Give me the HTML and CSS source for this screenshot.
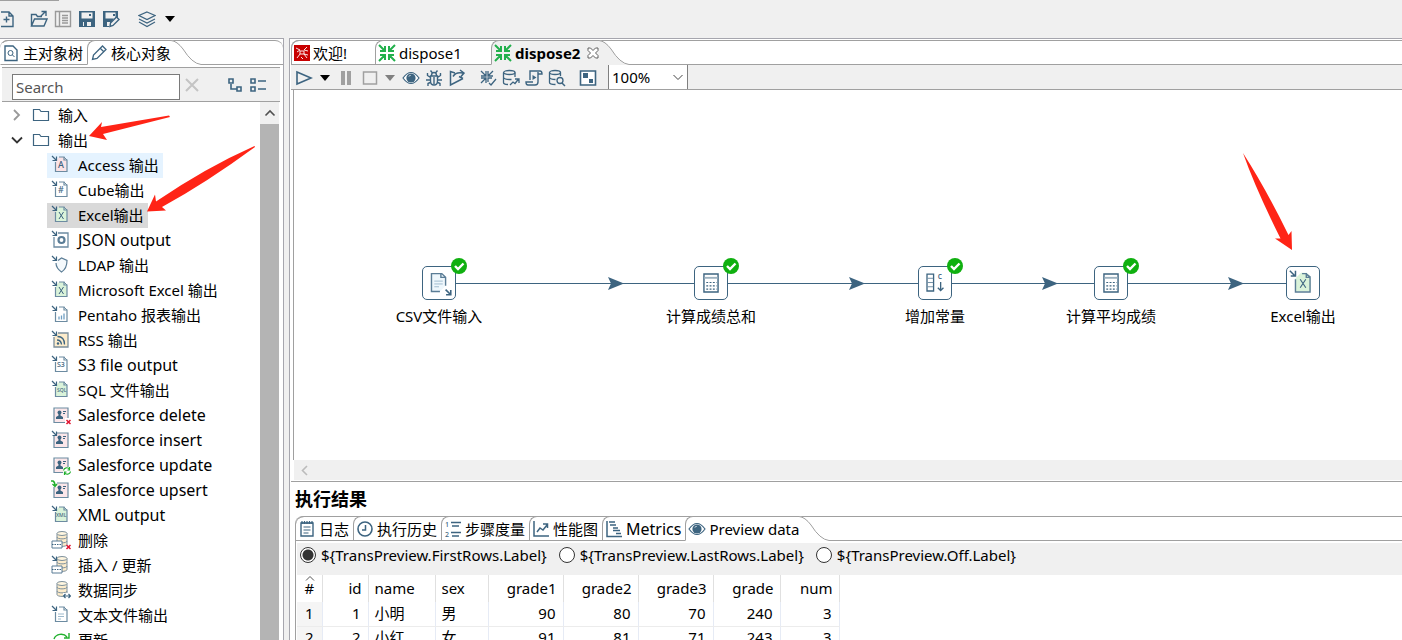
FILE: index.html
```html
<!DOCTYPE html>
<html lang="zh-CN">
<head>
<meta charset="utf-8">
<title>dispose2</title>
<link rel="stylesheet" href="styles.css">
</head>
<body>
<svg class="defs" aria-hidden="true">
  <defs>
    <g id="in-arrow"><path d="M1 1l4 4M5.500 1.500v4h-4" fill="none" stroke="#3d6480" stroke-width="1.200"/></g>
    <g id="doc"><path d="M4.500 7v9.500h11.500V5h-3V2H8" fill="none" stroke="#6c8ba1" stroke-width="1.200"/><path d="M13 2l3 3" stroke="#6c8ba1"/></g>
    <g id="contact"><path d="M3 6v12h14V3H6" fill="#fbe6e9"/><path d="M3 3h14v14.500H3z" fill="none" stroke="#6c8ba1" stroke-width="1.200"/><circle cx="8.500" cy="7.500" r="2" fill="#3d6480"/><path d="M5 14v-2l2.500-1.500V9h2v1.500L12 12v2zM12 6h3v1h-3zM12 8h2v1h-2z" fill="#3d6480"/></g>
    <g id="db"><path d="M6 3.500v11c0 2.500 10 2.500 10 0v-11" fill="#fdeccb" stroke="#7c8f9c"/><ellipse cx="11" cy="3.500" rx="5" ry="2" fill="#fff6e0" stroke="#7c8f9c"/><path d="M6 7c0 2.500 10 2.500 10 0M6 11c0 2.500 10 2.500 10 0" fill="none" stroke="#7c8f9c"/></g>
    <g id="slot"><path d="M1 11h10v7H1z" fill="#fff" stroke="#5b7d96"/><path d="M1 14.500h10" stroke="#3d6480" stroke-dasharray="1.500 1"/></g>
    <g id="redx"><path d="M15.500 15l4 4m0-4l-4 4" stroke="#e0122f" stroke-width="1.500"/></g>
    <symbol id="i-xls" viewBox="0 0 20 20"><path d="M5 6l3-4h5l3 3v12H5z" fill="#daf3da"/><use href="#doc"/><use href="#in-arrow"/><path d="M8 7l4.500 7M12.500 7L8 14" stroke="#3d6480" fill="none"/></symbol>
    <symbol id="folder" viewBox="0 0 20 20"><path d="M2.500 15.500v-11h6l1.500 2h7.500v9z" fill="#fff" stroke="#3d6480" stroke-width="1.200"/></symbol>
    <symbol id="eye" viewBox="0 0 18 18"><path d="M1 9q8-11 16 0q-8 11-16 0z" fill="#fff" stroke="#3d6480" stroke-width="1.200"/><circle cx="9" cy="9" r="4.600" fill="#3d6480"/><path d="M7 7.500l1.500-1.500" stroke="#fff"/></symbol>
    <symbol id="trans" viewBox="0 0 18 18"><path d="M1 1l5.500 5.500M2 7h5V2M17 1l-5.500 5.500M16 7h-5V2M1 17l5.500-5.500M2 11h5v5M17 17l-5.500-5.500M16 11h-5v5" fill="none" stroke="#22b04c" stroke-width="2"/></symbol>
    <symbol id="caret" viewBox="0 0 10 6"><path d="M0 0h10L5 6z" fill="currentColor"/></symbol>
    <symbol id="calc" viewBox="0 0 34 34"><path d="M9.500 7.500h15v19h-15z" fill="#fff" stroke="#3d6480" stroke-width="1.500"/><path d="M10 11.500h14" stroke="#9db2c0" stroke-width="2"/><path d="M12 16.500h11M12 20h11M12 23.500h11" stroke="#3d6480" stroke-width="1.200" stroke-dasharray="2 1.500"/></symbol>
    <symbol id="ok" viewBox="0 0 16 16"><circle cx="8" cy="8" r="8" fill="#10b010"/><path d="M4 8l3 3 5.500-5.500" fill="none" stroke="#fff" stroke-width="2.400"/></symbol>
    <symbol id="curve" viewBox="0 0 30 25"><path class="curve-fill" d="M0 0q6 1 12 9q9 14 18 15.500V25H0z"/><path d="M0 .5q6 .5 12 8.500q9 14.500 18 15.500" fill="none" stroke="#a0a0a0"/></symbol>
    <symbol id="shut" viewBox="0 0 12 12"><path d="M1 1h2.500L6 3.500 8.500 1H11v2.500L8.500 6 11 8.500V11H8.500L6 8.500 3.500 11H1V8.500L3.500 6 1 3.500z" fill="#fff" stroke="#606060"/></symbol>
  </defs>
</svg>

<header class="toolbar">
  <button class="tool narrow" aria-label="New"><svg viewBox="0 0 14 18"><path d="M1 2h8l4 4v10.500H1M6.500 6.500v6M3.500 9.500h6M9 2v4h4" fill="none" stroke="#3d6480" stroke-width="1.400"/></svg></button>
  <button class="tool" aria-label="Open"><svg viewBox="0 0 18 18"><path d="M1.500 16V4.500H6l1.500 2H12M1.500 16L4.500 9H17l-3 7zM10 7l5.500-5.500M11.500 1.500H16V6" fill="none" stroke="#3d6480" stroke-width="1.400"/></svg></button>
  <button class="tool" aria-label="Explore"><svg viewBox="0 0 18 18"><path d="M1.500 1.500h15v15h-15zM5.500 2v14M8 5.500h6M8 8h6M8 10.500h6M8 13h6" fill="none" stroke="#999" stroke-width="1.400"/></svg></button>
  <button class="tool" aria-label="Save"><svg viewBox="0 0 18 18"><path d="M1 1h16v16H1z" fill="#3d6480"/><path d="M3.500 2.500h11v6h-11zM5 12h8v4H5z" fill="#f0f0f0"/><path d="M6 12h3v4H6zM11 4h2v2h-2z" fill="#3d6480"/></svg></button>
  <button class="tool" aria-label="Save as"><svg viewBox="0 0 18 18"><path d="M1 1h15v7H12l-5 9H1z" fill="#3d6480"/><path d="M3.500 2.500h10v6h-10zM5 12h3v4H5z" fill="#f0f0f0"/><path d="M11 4h2v2h-2z" fill="#3d6480"/><path d="M8.500 13l6-6 2.500 2.500-6 6-3 1z" fill="#f0f0f0" stroke="#3d6480" stroke-width="1.400"/></svg></button>
  <button class="tool layers" aria-label="Perspective"><svg viewBox="0 0 18 18"><path d="M9 2l8 3.500L9 9.500 1 5.500zM1 9l8 4 8-4M1 12l8 4.500 8-4.500" fill="none" stroke="#3d6480" stroke-width="1.200"/></svg></button>
  <button class="tool drop" aria-label="Perspective menu"><svg><use href="#caret"/></svg></button>
</header>

<main class="workspace">
  <aside class="side">
    <div class="tabs" role="tablist">
      <button class="tab" role="tab"><svg viewBox="0 0 18 18"><path d="M3 2h8l4 4v10.500H3z" fill="none" stroke="#3d6480" stroke-width="1.400"/><circle cx="8.500" cy="9" r="2.500" fill="none" stroke="#3d6480"/><path d="M10.500 11l2 2" stroke="#3d6480"/></svg>主对象树</button>
      <button class="tab on" role="tab" aria-selected="true"><svg viewBox="0 0 18 18"><path d="M2.500 15.500l1-4.500 9-9 3.500 3.500-9 9zM10.500 4.500l3 3" fill="none" stroke="#3d6480" stroke-width="1.300"/></svg>核心对象</button>
      <svg class="curve"><use href="#curve"/></svg>
    </div>
    <div class="search">
      <input type="text" placeholder="Search" aria-label="Search">
      <button class="tool" aria-label="Clear"><svg viewBox="0 0 18 18"><path d="M3 3l12 12M15 3L3 15" stroke="#c4c4c4" stroke-width="2"/></svg></button>
      <button class="tool expand" aria-label="Expand all"><svg viewBox="0 0 18 18"><path d="M3 3h4v4H3zM11 11h4v4h-4zM5 8v5h6" fill="none" stroke="#3d6480" stroke-width="1.600"/></svg></button>
      <button class="tool" aria-label="Collapse all"><svg viewBox="0 0 18 18"><path d="M2 3h4v4H2zM2 11h4v4H2zM9 5h8M9 13h8" fill="none" stroke="#3d6480" stroke-width="1.600"/></svg></button>
    </div>
    <div class="tree-wrap">
      <ul class="tree">
        <li class="group"><svg class="twist" viewBox="0 0 12 12"><path d="M3 1l5 5-5 5" fill="none" stroke="#999" stroke-width="1.800"/></svg><svg><use href="#folder"/></svg>输入</li>
        <li class="group"><svg class="twist" viewBox="0 0 12 12"><path d="M1 3.500l5 5 5-5" fill="none" stroke="#333" stroke-width="1.800"/></svg><svg><use href="#folder"/></svg>输出</li>
        <li class="leaf hover"><svg viewBox="0 0 20 20"><path d="M5 6l3-4h5l3 3v12H5z" fill="#fbe3e6"/><use href="#doc"/><use href="#in-arrow"/><text x="7" y="13">A</text></svg>Access 输出</li>
        <li class="leaf"><svg viewBox="0 0 20 20"><use href="#doc"/><use href="#in-arrow"/><text x="7" y="13">#</text></svg>Cube输出</li>
        <li class="leaf picked"><svg><use href="#i-xls"/></svg>Excel输出</li>
        <li class="leaf latin"><svg viewBox="0 0 20 20"><path d="M3 7v10h14V3H7" fill="none" stroke="#6c8ba1" stroke-width="1.300"/><use href="#in-arrow"/><circle cx="10.500" cy="10" r="3" fill="none" stroke="#5b7d96" stroke-width="2.200"/></svg>JSON output</li>
        <li class="leaf"><svg viewBox="0 0 20 20"><path d="M7 5.500L10.500 3l5.500 2.500C16 11 14.500 14.500 10.500 17 7 14.500 5 12 5 8" fill="#f4f9fc" stroke="#5b7d96" stroke-width="1.200"/><use href="#in-arrow"/></svg>LDAP 输出</li>
        <li class="leaf"><svg><use href="#i-xls"/></svg>Microsoft Excel 输出</li>
        <li class="leaf"><svg viewBox="0 0 20 20"><use href="#doc"/><use href="#in-arrow"/><path d="M8 14.500v-3M10.500 14.500v-4M13 14.500v-6" stroke="#6f9fc4" stroke-width="1.300"/></svg>Pentaho 报表输出</li>
        <li class="leaf"><svg viewBox="0 0 20 20"><path d="M3 7v10h14V3H7z" fill="#fdeccb"/><path d="M3 7v10h14V3H7" fill="none" stroke="#7c8f9c" stroke-width="1.300"/><use href="#in-arrow"/><path d="M6 10q4 0 4.500 4.500M6.500 6.500q7 0 7 8" fill="none" stroke="#3d6480" stroke-width="1.300"/><circle cx="7" cy="13.500" r="1.200" fill="#3d6480"/></svg>RSS 输出</li>
        <li class="leaf latin"><svg viewBox="0 0 20 20"><use href="#doc"/><use href="#in-arrow"/><text class="small" x="6" y="12">S3</text></svg>S3 file output</li>
        <li class="leaf"><svg viewBox="0 0 20 20"><path d="M5 6l3-4h5l3 3v12H5z" fill="#daf3da"/><use href="#doc"/><use href="#in-arrow"/><text class="tiny" x="6" y="12">SQL</text></svg>SQL 文件输出</li>
        <li class="leaf latin"><svg viewBox="0 0 20 20"><use href="#contact"/><path d="M14 13h6v7h-6z" fill="#fff"/><use href="#redx"/></svg>Salesforce delete</li>
        <li class="leaf latin"><svg viewBox="0 0 20 20"><use href="#contact"/><path d="M0 0h6v6H0z" fill="#fff"/><use href="#in-arrow"/></svg>Salesforce insert</li>
        <li class="leaf latin"><svg viewBox="0 0 20 20"><use href="#contact"/><path d="M12 12h8v8h-8z" fill="#fff"/><path d="M12.500 15.500a3.200 3.200 0 0 1 6-1M19.500 16.500a3.200 3.200 0 0 1-6 1M18.500 12v3h-2M13.500 20v-3h2" fill="none" stroke="#22b02e" stroke-width="1.200"/></svg>Salesforce update</li>
        <li class="leaf latin"><svg viewBox="0 0 20 20"><use href="#contact"/><path d="M0 0h6v7H0z" fill="#fff"/><path d="M0 1h2q2 1 2 5M1.500 4L4 6.500 6 4" fill="none" stroke="#22b02e" stroke-width="1.400"/></svg>Salesforce upsert</li>
        <li class="leaf latin"><svg viewBox="0 0 20 20"><path d="M5 6l3-4h5l3 3v12H5z" fill="#daf3da"/><use href="#doc"/><use href="#in-arrow"/><text class="tiny" x="5" y="12">XML</text></svg>XML output</li>
        <li class="leaf"><svg viewBox="0 0 20 20"><use href="#db"/><use href="#slot"/><use href="#redx"/></svg>删除</li>
        <li class="leaf"><svg viewBox="0 0 20 20"><use href="#db"/><use href="#slot"/><use href="#in-arrow"/></svg>插入 / 更新</li>
        <li class="leaf"><svg viewBox="0 0 20 20"><use href="#db"/><path d="M12 13h8v6h-8z" fill="#fff"/><path d="M12.500 16h7M14.500 14l-2 2 2 2M17.500 14l2 2-2 2" fill="none" stroke="#3d6480" stroke-width="1.200"/></svg>数据同步</li>
        <li class="leaf"><svg viewBox="0 0 20 20"><use href="#doc"/><use href="#in-arrow"/><path d="M7 9h6M7 11.500h6M7 14h3" stroke="#9db9cc"/></svg>文本文件输出</li>
        <li class="leaf"><svg viewBox="0 0 20 20"><path d="M3 9a7.500 7 0 0 1 13-2M18 3v5h-5M17 12a7.500 7 0 0 1-13 2M3 18v-5h4" fill="none" stroke="#22b02e" stroke-width="1.400"/></svg>更新</li>
      </ul>
      <div class="vscroll"><button aria-label="Scroll up"><svg viewBox="0 0 12 12"><path d="M1.500 8.500L6 4l4.500 4.500" fill="none" stroke="#505050" stroke-width="1.600"/></svg></button></div>
    </div>
  </aside>

  <section class="main">
    <div class="editor">
      <div class="tabs gray" role="tablist">
        <button class="tab welcome" role="tab"><svg viewBox="0 0 18 18"><path d="M1 1h16v16H1z" fill="#c80000"/><path d="M3 4l4 2-3 2M14 3l-3 3 4 1M4 14l3-4M14 14l-3-4 4 1M7 7h4v3H7zM8 13l2 2" fill="none" stroke="#fff" stroke-width=".9"/></svg>欢迎!</button>
        <button class="tab other" role="tab"><svg><use href="#trans"/></svg>dispose1</button>
        <button class="tab on bold" role="tab" aria-selected="true"><svg><use href="#trans"/></svg>dispose2<svg class="shut"><use href="#shut"/></svg></button>
        <svg class="curve"><use href="#curve"/></svg>
      </div>
      <div class="runbar">
        <button class="tool" aria-label="Run"><svg viewBox="0 0 18 18"><path d="M2 3l14 6-14 6z" fill="none" stroke="#3d6480" stroke-width="1.600"/></svg></button>
        <button class="tool drop" aria-label="Run options"><svg><use href="#caret"/></svg></button>
        <button class="tool" aria-label="Pause"><svg viewBox="0 0 18 18"><path d="M4 2h4v14H4zM10 2h4v14h-4z" fill="#a0a0a0"/></svg></button>
        <button class="tool" aria-label="Stop"><svg viewBox="0 0 18 18"><path d="M3.500 3h13v12h-13z" fill="none" stroke="#a0a0a0" stroke-width="1.500"/></svg></button>
        <button class="tool drop dim" aria-label="Stop options"><svg><use href="#caret"/></svg></button>
        <button class="tool" aria-label="Preview"><svg><use href="#eye"/></svg></button>
        <button class="tool" aria-label="Debug"><svg viewBox="0 0 18 18"><path d="M5.500 7h7v5q0 4-3.500 4t-3.500-4zM6.500 6.500q0-3 2.500-3t2.500 3M5.500 1.500l2 2.500M12.500 1.500l-2 2.500M5.500 8.500L2.500 6.500V4M12.500 8.500l3-2V4M5.500 11H1M12.500 11H17M6 13l-3 1.500V17M12 13l3 1.500V17M9 8v7" fill="none" stroke="#3d6480" stroke-width="1.400"/></svg></button>
        <button class="tool" aria-label="Replay"><svg viewBox="0 0 18 18"><path d="M7 4L2.500 2.500v13.500L15 9.500M5 7.500q3-5 10-3.500M12 1l4 3-3 3.500M11 7.500l4 2" fill="none" stroke="#3d6480" stroke-width="1.500"/></svg></button>
        <button class="tool lead" aria-label="Verify"><svg viewBox="0 0 18 18"><path d="M2 2l4.500 4.500M2 7h5V2M14 2L9.500 6.500M14 7H9V2M2 14l4.500-4.500M2 9h5v5M9 13V9h4M10 14l2 2 5-6" fill="none" stroke="#3d6480" stroke-width="1.300"/></svg></button>
        <button class="tool" aria-label="Impact"><svg viewBox="0 0 18 18"><path d="M13 8V3.500M1.500 3.500v10q0 2 4.500 2M1.500 8.500q1 2 6 2h2" fill="none" stroke="#3d6480" stroke-width="1.300"/><ellipse cx="7.300" cy="3.500" rx="5.700" ry="2" fill="none" stroke="#3d6480" stroke-width="1.300"/><path d="M8 16l3-3 2 1.500 3.500-4.500M13 10h4v4" fill="none" stroke="#3d6480" stroke-width="1.300"/></svg></button>
        <button class="tool" aria-label="SQL"><svg viewBox="0 0 18 18"><path d="M5 11V2h10q2 0 2 3h-4M13 3v10q0 3-3 3H3q-2 0-2-3h7" fill="none" stroke="#3d6480" stroke-width="1.400"/><path d="M7.500 6l4 2.500-4 2.500z" fill="#3d6480"/></svg></button>
        <button class="tool" aria-label="Explore database"><svg viewBox="0 0 18 18"><path d="M12.500 7V3.500M1.500 3.500v10q0 2 6 2M1.500 8.500q1 2 6 2" fill="none" stroke="#3d6480" stroke-width="1.300"/><ellipse cx="7" cy="3.500" rx="5.500" ry="2" fill="none" stroke="#3d6480" stroke-width="1.300"/><circle cx="12" cy="11.500" r="3" fill="none" stroke="#3d6480" stroke-width="1.300"/><path d="M14 14l3 3" stroke="#3d6480" stroke-width="1.500"/></svg></button>
        <button class="tool lead" aria-label="Show results"><svg viewBox="0 0 18 18"><path d="M1.500 2h15v14h-15z" fill="#fff" stroke="#3d6480" stroke-width="1.600"/><path d="M4 4h5v5H4zM10 10h4v4h-4z" fill="#3d6480"/></svg></button>
        <label class="zoom"><select aria-label="Zoom"><option>100%</option></select><svg viewBox="0 0 12 12"><path d="M1.500 4L6 8.500 10.500 4" fill="none" stroke="#444"/></svg></label>
      </div>
      <div class="canvas">
        <svg class="hops" aria-hidden="true"><path d="M162 193.500h238M434 193.500h190M658 193.500h142M834 193.500h158" stroke="#3d6480"/><path d="M314 187l16 6.500-16 6.500 3-6.500zM555 187l16 6.500-16 6.500 3-6.500zM748 187l16 6.500-16 6.500 3-6.500zM934 187l16 6.500-16 6.500 3-6.500z" fill="#3d6480"/></svg>
        <div class="node n1"><div class="box"><svg viewBox="0 0 34 34"><path d="M9 7h10l4 4v10l-5 5H9z" fill="#eef7fc"/><path d="M24 20v-9l-4-4H9v19h9M19 7v4h5" fill="none" stroke="#5b7d96" stroke-width="1.500"/><path d="M12 15h9M12 18h9M12 21h5" stroke="#9db9cc"/><path d="M24 24l5 5M29.500 24.500v5h-5" fill="none" stroke="#3d6480" stroke-width="1.700"/></svg></div><svg class="ok"><use href="#ok"/></svg><span>CSV文件输入</span></div>
        <div class="node n2"><div class="box"><svg><use href="#calc"/></svg></div><svg class="ok"><use href="#ok"/></svg><span>计算成绩总和</span></div>
        <div class="node n3"><div class="box"><svg viewBox="0 0 34 34"><path d="M8.500 7.500h7v18h-7zM23 16v9M20 22l3 3 3-3" fill="none" stroke="#3d6480" stroke-width="1.400"/><path d="M9 12h6M9 16.500h6M9 21h6" stroke="#6c8ba1"/><text x="20" y="13">c</text></svg></div><svg class="ok"><use href="#ok"/></svg><span>增加常量</span></div>
        <div class="node n4"><div class="box"><svg><use href="#calc"/></svg></div><svg class="ok"><use href="#ok"/></svg><span>计算平均成绩</span></div>
        <div class="node n5"><div class="box"><svg viewBox="0 0 34 34"><path d="M9 12l6-6h6l4 4v16H9z" fill="#daf3da"/><path d="M9 13v13.500h15.500V11h-4V7H16M20 7l5 4" fill="none" stroke="#5b7d96" stroke-width="1.500"/><path d="M14 13l6 9M20 13l-6 9" stroke="#3d6480" stroke-width="1.200"/><path d="M3 4l5 5M9 4v5.500H4" fill="none" stroke="#3d6480" stroke-width="1.600"/></svg></div><span>Excel输出</span></div>
      </div>
      <div class="hscroll"><button aria-label="Scroll left"><svg viewBox="0 0 12 12"><path d="M9 2L4.500 6.500 9 11" fill="none" stroke="#bbb" stroke-width="1.600"/></svg></button></div>
    </div>

    <div class="results">
      <h2>执行结果</h2>
      <div class="result-box">
        <div class="tabs" role="tablist">
          <button class="tab" role="tab"><svg viewBox="0 0 18 18"><path d="M3 3h12v13H3z" fill="none" stroke="#3d6480" stroke-width="1.400"/><path d="M3 3h12M5.500 7h7M5.500 10h7M5.500 13h5M4 1v3M6.500 1v3M9 1v3M11.500 1v3M14 1v3" stroke="#3d6480" stroke-width="1.200"/></svg>日志</button>
          <button class="tab" role="tab"><svg viewBox="0 0 18 18"><circle cx="9" cy="9" r="7" fill="none" stroke="#3d6480" stroke-width="1.600"/><path d="M9.500 5v5H6" fill="none" stroke="#3d6480" stroke-width="1.500"/></svg>执行历史</button>
          <button class="tab" role="tab"><svg viewBox="0 0 18 18"><path d="M7 2.500h10M8 6h7M7 12.500h10M8 16h7" stroke="#3d6480" stroke-width="1.300"/><text class="small" x="1" y="7">1</text><text class="small" x="1" y="17">2</text></svg>步骤度量</button>
          <button class="tab" role="tab"><svg viewBox="0 0 18 18"><path d="M2 1v15h15M5 12l3-4 3 2 4-5M11 4h4.500v4" fill="none" stroke="#3d6480" stroke-width="1.500"/></svg>性能图</button>
          <button class="tab latin" role="tab"><svg viewBox="0 0 18 18"><path d="M2 1v15.500h15" fill="none" stroke="#3d6480" stroke-width="1.500"/><path d="M4 2h6M5 5h6M8 8h5M8 10.500h7M11 13.500h5" stroke="#3d6480" stroke-width="1.700"/></svg>Metrics</button>
          <button class="tab on" role="tab" aria-selected="true"><svg><use href="#eye"/></svg>Preview data</button>
          <svg class="curve"><use href="#curve"/></svg>
        </div>
        <div class="pane">
          <div class="radios">
            <label><input type="radio" name="rows" checked>${TransPreview.FirstRows.Label}</label>
            <label><input type="radio" name="rows">${TransPreview.LastRows.Label}</label>
            <label><input type="radio" name="rows">${TransPreview.Off.Label}</label>
          </div>
          <div class="grid">
            <table>
              <colgroup><col class="c-idx"><col class="c-id"><col class="c-name"><col class="c-sex"><col class="c-grade"><col class="c-grade"><col class="c-grade"><col class="c-sum"><col class="c-num"></colgroup>
              <thead><tr><th class="idx"><svg class="sort" viewBox="0 0 10 5"><path d="M1 4.500l4-4 4 4" fill="none" stroke="#555"/></svg>#</th><th class="num">id</th><th>name</th><th>sex</th><th class="num">grade1</th><th class="num">grade2</th><th class="num">grade3</th><th class="num">grade</th><th class="num">num</th></tr></thead>
              <tbody>
                <tr><td class="idx">1</td><td class="num">1</td><td>小明</td><td>男</td><td class="num">90</td><td class="num">80</td><td class="num">70</td><td class="num">240</td><td class="num">3</td></tr>
                <tr><td class="idx">2</td><td class="num">2</td><td>小红</td><td>女</td><td class="num">91</td><td class="num">81</td><td class="num">71</td><td class="num">243</td><td class="num">3</td></tr>
              </tbody>
            </table>
          </div>
        </div>
      </div>
    </div>
  </section>
</main>

<svg class="marks" aria-hidden="true"><path d="M89 136L102 122l-1 5 68-11.500 1 1.500-67 17 4 6zM147 211.500L155 194.500l1 7q50-34 98.500-55.500l.5 1q-49 36-93 60l4 3.500zM1243 153q23 36 45.500 82l3-4 .5 19-17-11.500h5.500q-25-50-37.500-85.500z" fill="#ff2416"/></svg>
</body>
</html>
```

FILE: styles.css
```css
* { box-sizing: border-box; }

body {
  margin: 0;
  height: 100vh;
  display: flex;
  flex-direction: column;
  overflow: hidden;
  background: #f0f0f0;
  color: #000;
  font: 15px/20px "Noto Sans", "Noto Sans CJK SC", sans-serif;
}

button {
  padding: 0;
  border: 0;
  background: none;
  color: inherit;
  font: inherit;
}

svg { flex: none; display: block; }
svg text { font-size: 9px; font-weight: 500; fill: #3d6480; }
svg text.small { font-size: 7px; }
svg text.tiny { font-size: 5px; }
.defs { position: absolute; width: 0; height: 0; }
.latin { font-size: 16px; }

/* tool buttons */
.tool, .tool svg { width: 18px; height: 18px; flex: none; }
.tool.narrow, .tool.narrow svg { width: 14px; }
.tool.drop { width: 10px; height: 6px; }
.tool.drop svg { width: 10px; height: 6px; }
.tool.dim { color: #808080; }

.toolbar {
  position: relative;
  flex: none;
  height: 38px;
  display: flex;
  align-items: center;
  gap: 6px;
}
.toolbar::before {
  content: "";
  position: absolute;
  top: 0;
  left: 0;
  width: 59px;
  height: 1px;
  background: #a0a0a0;
}
.toolbar .narrow { margin-right: 10px; }
.toolbar .layers { margin-left: 12px; }
.toolbar .drop { margin-left: 3px; }

.workspace { flex: 1; min-height: 0; display: flex; gap: 5px; }

/* tab strips */
.tabs {
  --fill: #fff;
  flex: none;
  height: 25px;
  display: flex;
  border-top: 1px solid #a0a0a0;
  border-radius: 8px 8px 0 0;
  background: #fff;
}
.tabs.gray { --fill: #f0f0f0; }
.tabs::after { content: ""; flex: 1; border-bottom: 1px solid #a0a0a0; }
.tab {
  height: 25px;
  margin-top: -1px;
  padding: 0 4px 0 2px;
  display: flex;
  align-items: center;
  gap: 3px;
  white-space: nowrap;
  border: solid #a0a0a0;
  border-width: 1px 0 1px 1px;
  border-top-left-radius: 8px;
}
.tab svg { width: 18px; height: 18px; }
.tab.on { padding-right: 0; border-bottom-color: var(--fill); background: var(--fill); }
.tab.bold { font-weight: 700; }
.tab svg.shut { width: 12px; height: 12px; margin-left: 4px; }
.tab.welcome { width: 84px; padding-left: 1px; gap: 2px; }
.tab.other { width: 116px; }
.curve { width: 30px; height: 25px; margin-top: -1px; fill: var(--fill); }

/* object palette */
.side {
  flex: none;
  width: 284px;
  display: flex;
  flex-direction: column;
  padding-top: 1px;
  border: solid #a6a6ae;
  border-width: 1px 1px 0 0;
  background: #fff;
}
.side > .tabs .tab:first-child { border-left-color: transparent; padding-left: 1px; }
.search {
  height: 35px;
  margin: 2px 3px 0 2px;
  padding: 0 13px 0 10px;
  display: flex;
  align-items: center;
  gap: 3px;
  border: solid #a0a0a0;
  border-width: 1px 0;
  background: #f0f0f0;
}
.search input {
  flex: 1;
  min-width: 0;
  height: 26px;
  margin-top: 4px;
  padding: 0 3px;
  border: 1px solid #7a7a7a;
  background: #fff;
  font: inherit;
}
.search input::placeholder { color: #555; opacity: 1; }
.search .expand { margin: 0 2px 0 22px; }

.tree-wrap { flex: 1; min-height: 0; display: flex; padding-right: 4px; }
.tree {
  flex: 1;
  min-width: 0;
  margin: 0;
  padding: 1px 0 0;
  overflow: hidden;
  list-style: none;
}
.tree li {
  width: fit-content;
  height: 25px;
  padding: 0 4px 2px;
  display: flex;
  align-items: center;
  gap: 7px;
  white-space: nowrap;
}
.tree svg { width: 20px; height: 20px; }
.tree .group { padding-left: 11px; }
.tree .group svg.twist { width: 12px; height: 12px; margin-right: 1px; }
.tree .leaf { margin-left: 47px; }
.tree .hover { background: #e5f3ff; }
.tree .picked { background: #d9d9d9; }

.vscroll { width: 19px; background: #b4b4b4; }
.vscroll button {
  width: 100%;
  height: 22px;
  display: grid;
  place-items: center;
  background: #f0f0f0;
}
.vscroll svg, .hscroll svg { width: 12px; height: 12px; }

/* editor */
.main {
  flex: 1;
  min-width: 0;
  display: flex;
  flex-direction: column;
  padding: 1px 0 0 1px;
  border: solid #a6a6ae;
  border-width: 1px 0 0 1px;
  background: #fff;
}
.editor {
  flex: 442;
  min-height: 0;
  display: flex;
  flex-direction: column;
  border-bottom: 1px solid #a0a0a0;
}
.tabs.gray { border-top-right-radius: 0; }
.runbar {
  flex: none;
  height: 25px;
  padding-left: 4px;
  display: flex;
  align-items: center;
  gap: 5px;
  border-bottom: 1px solid #a0a0a0;
  background: #f0f0f0;
}
.runbar .tool { margin-top: 1px; }
.runbar .drop { margin: 1px 2px 0; }
.runbar .lead { margin-left: 8px; }
.zoom {
  position: relative;
  width: 80px;
  height: 24px;
  margin-left: 6px;
  border: solid #808080;
  border-width: 0 1px;
  background: #fff;
}
.zoom select {
  width: 100%;
  height: 100%;
  padding: 0 3px;
  border: 0;
  appearance: none;
  background: none;
  color: inherit;
  font: inherit;
}
.zoom svg { position: absolute; right: 3px; top: 6px; width: 12px; height: 12px; pointer-events: none; }

.canvas {
  position: relative;
  flex: 1;
  min-height: 0;
  margin-left: 2px;
  border-left: 1px solid #a0a0a0;
  overflow: hidden;
}
.hops { position: absolute; top: 0; left: 0; width: 100%; height: 100%; }
.node {
  position: absolute;
  top: 176px;
  width: 100px;
  display: flex;
  flex-direction: column;
  align-items: center;
  gap: 6px;
}
.n1 { left: 95px; }
.n2 { left: 367px; }
.n3 { left: 591px; }
.n4 { left: 767px; }
.n5 { left: 959px; }
.box { width: 34px; height: 34px; border: 1px solid #3d6480; border-radius: 5px; background: #fff; }
.box svg { width: 32px; height: 32px; }
.ok { position: absolute; top: -8px; left: 62px; width: 16px; height: 16px; }
.hscroll {
  flex: none;
  height: 20px;
  margin: 0 0 1px 3px;
  padding-left: 4px;
  display: flex;
  align-items: center;
  background: #f0f0f0;
}

/* results */
.results { flex: 158; min-height: 0; padding-left: 4px; overflow: hidden; }
.results h2 { margin: 0; padding: 5px 0; font-size: 18px; line-height: 24px; font-weight: 700; }
.result-box { border-left: 1px solid #a0a0a0; border-top-left-radius: 8px; }
.result-box .tabs { border-top-right-radius: 0; }
.result-box .tab:first-child { border-left: 0; }
.pane { margin: 2px 0 0 1px; }
.radios {
  height: 32px;
  padding: 0 3px 8px;
  display: flex;
  align-items: center;
  gap: 12px;
  background: #f0f0f0;
}
.radios label { display: flex; align-items: center; gap: 5px; }
.radios input {
  width: 16px;
  height: 16px;
  margin: 0;
  appearance: none;
  border: 1px solid #333;
  border-radius: 50%;
  background: #fff;
}
.radios input:checked { background: radial-gradient(#333 5px, #fff 6px); }

.grid { background: #fff; }
table { table-layout: fixed; width: 542px; border-collapse: collapse; }
.c-idx { width: 25px; }
.c-id { width: 46px; }
.c-name { width: 67px; }
.c-sex { width: 53px; }
.c-grade { width: 75px; }
.c-sum { width: 67px; }
.c-num { width: 59px; }
th, td { padding: 0 6px 2px; text-align: left; font-weight: 400; }
th { position: relative; height: 27px; border-right: 1px solid #e0e0e0; }
td { height: 24px; border-right: 1px solid #e6ebf5; border-bottom: 1px solid #ececec; }
.num { text-align: right; }
td.num { padding-right: 7px; }
.idx { padding: 0 4px 2px; text-align: center; }
td.idx { background: #f5f5f5; }
.sort { position: absolute; top: 1px; left: 8px; width: 10px; height: 5px; }

/* red pointers drawn over the window */
.marks { position: absolute; top: 0; left: 0; width: 100%; height: 100%; pointer-events: none; }
```
